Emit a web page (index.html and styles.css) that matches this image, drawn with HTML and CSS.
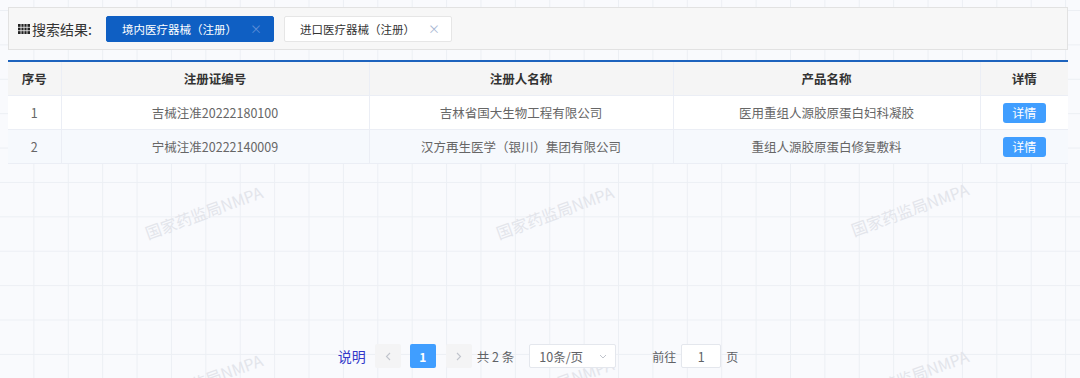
FILE: index.html
```html
<!DOCTYPE html>
<html lang="zh-CN">
<head>
<meta charset="UTF-8">
<meta name="viewport" content="width=device-width, initial-scale=1.0">
<title>搜索结果</title>
<link rel="stylesheet" href="styles.css">
</head>
<body>

<div class="page">

  <!-- 水印 -->
  <div class="watermarks">
    <span class="wm wm-1">国家药监局NMPA</span>
    <span class="wm wm-2">国家药监局NMPA</span>
    <span class="wm wm-3">国家药监局NMPA</span>
    <span class="wm wm-4">国家药监局NMPA</span>
    <span class="wm wm-5">国家药监局NMPA</span>
    <span class="wm wm-6">国家药监局NMPA</span>
  </div>

  <!-- 搜索结果标签 -->
  <div class="result-bar">
    <svg class="bar-icon" width="12" height="10" viewBox="0 0 12 10">
      <rect x="0" y="0" width="12" height="10" fill="#222"/>
      <path d="M3 0V10M6 0V10M9 0V10M0 3.3H12M0 6.7H12" stroke="#f7f7f7" stroke-width="0.8"/>
    </svg>
    <span class="bar-label">搜索结果:</span>
    <div class="tabs">
      <span class="tab active">境内医疗器械（注册）<i class="tab-close">×</i></span>
      <span class="tab">进口医疗器械（注册）<i class="tab-close">×</i></span>
    </div>
  </div>

  <!-- 结果表格 -->
  <table class="result-table">
    <colgroup>
      <col class="c-no">
      <col class="c-code">
      <col class="c-owner">
      <col class="c-product">
      <col class="c-detail">
    </colgroup>
    <thead>
      <tr>
        <th>序号</th>
        <th>注册证编号</th>
        <th>注册人名称</th>
        <th>产品名称</th>
        <th>详情</th>
      </tr>
    </thead>
    <tbody>
      <tr>
        <td>1</td>
        <td>吉械注准20222180100</td>
        <td>吉林省国大生物工程有限公司</td>
        <td>医用重组人源胶原蛋白妇科凝胶</td>
        <td><button class="btn-detail">详情</button></td>
      </tr>
      <tr class="striped">
        <td>2</td>
        <td>宁械注准20222140009</td>
        <td>汉方再生医学（银川）集团有限公司</td>
        <td>重组人源胶原蛋白修复敷料</td>
        <td><button class="btn-detail">详情</button></td>
      </tr>
    </tbody>
  </table>

  <!-- 分页 -->
  <div class="pager">
    <a class="pager-note">说明</a>
    <span class="pager-btn">
      <svg width="6" height="9" viewBox="0 0 6 9"><path d="M5 1L1.5 4.5L5 8" fill="none" stroke="#c0c4cc" stroke-width="1.1"/></svg>
    </span>
    <span class="pager-btn current">1</span>
    <span class="pager-btn">
      <svg width="6" height="9" viewBox="0 0 6 9"><path d="M1 1L4.5 4.5L1 8" fill="none" stroke="#c0c4cc" stroke-width="1.1"/></svg>
    </span>
    <span class="pager-total">共 2 条</span>
    <span class="pager-size">
      10条/页
      <svg width="8" height="5" viewBox="0 0 8 5"><path d="M1 1L4 4L7 1" fill="none" stroke="#c0c4cc" stroke-width="1"/></svg>
    </span>
    <span class="pager-jump">前往<span class="jump-input">1</span>页</span>
  </div>

</div>

</body>
</html>
```

FILE: styles.css
```css
body {
  margin: 0;
  font-family: "Noto Sans CJK SC", "Noto Sans", sans-serif;
  background: #fafbfd;
}
.page {
  position: relative;
  height: 378px;
  box-sizing: border-box;
  padding: 7px 12px 0 8px;
  overflow: hidden;
  background-color: #f9fafd;
  background-image:
    linear-gradient(to right, #eceff4 1px, transparent 1px),
    linear-gradient(to bottom, #eceff4 1px, transparent 1px);
  background-size: 34.4px 34.4px;
  background-position: -1px 10px;
}

/* 水印 */
.watermarks {
  position: absolute;
  inset: 0;
  z-index: 0;
}
.wm {
  position: absolute;
  font-size: 16px;
  color: #e3e5eb;
  white-space: nowrap;
  transform: rotate(-20deg);
  transform-origin: center;
}
.wm-1 { left: 142px; top: 200px; }
.wm-2 { left: 493px; top: 200px; }
.wm-3 { left: 848px; top: 197px; }
.wm-4 { left: 142px; top: 368px; }
.wm-5 { left: 493px; top: 372px; }
.wm-6 { left: 848px; top: 364px; }

/* 搜索结果标签 */
.result-bar {
  position: relative;
  z-index: 1;
  height: 43px;
  box-sizing: border-box;
  display: flex;
  align-items: center;
  padding-left: 9px;
  background: #f7f7f7;
  border: 1px solid #e2e2e2;
}
.bar-icon {
  margin-right: 2px;
}
.bar-label {
  font-size: 14px;
  color: #333;
  margin-right: 14px;
}
.tabs {
  display: flex;
  gap: 10px;
}
.tab {
  display: flex;
  align-items: center;
  justify-content: space-between;
  width: 168px;
  height: 26px;
  box-sizing: border-box;
  padding: 0 11px 0 15px;
  font-size: 11.5px;
  color: #333;
  background: #fff;
  border: 1px solid #e6e6e6;
  border-radius: 2px;
}
.tab.active {
  color: #fff;
  background: #0f5fc3;
  border-color: #0f5fc3;
}
.tab-close {
  font-style: normal;
  font-size: 12px;
  color: #a7b6d3;
}
.tab.active .tab-close {
  color: #5e8fd8;
}

/* 结果表格 */
.result-table {
  position: relative;
  z-index: 1;
  width: 100%;
  margin-top: 10px;
  border-collapse: collapse;
  table-layout: fixed;
  border-top: 2px solid #1d63bd;
  font-size: 12.5px;
}
.c-no { width: 53px; }
.c-code { width: 308px; }
.c-owner { width: 304px; }
.c-product { width: 307px; }
.c-detail { width: 88px; }
.result-table th,
.result-table td {
  height: 33px;
  padding: 0;
  text-align: center;
  border-bottom: 1px solid #ebeef5;
  border-left: 1px solid #ebeef5;
}
.result-table th:first-child,
.result-table td:first-child {
  border-left: none;
}
.result-table th {
  background: #f5f5f5;
  color: #333;
  font-weight: bold;
}
.result-table td {
  background: #fff;
  color: #666;
}
.result-table .striped td {
  background: #f6f9fd;
}
.btn-detail {
  width: 43px;
  height: 20px;
  padding: 0;
  border: none;
  border-radius: 3px;
  background: #409eff;
  color: #fff;
  font-family: inherit;
  font-size: 12px;
  line-height: 20px;
}

/* 分页 */
.pager {
  position: relative;
  z-index: 1;
  display: flex;
  align-items: center;
  justify-content: center;
  margin-top: 180px;
  font-size: 12.5px;
  color: #606266;
}
.pager-note {
  font-size: 14px;
  color: #3338c9;
  margin-right: 9px;
}
.pager-btn {
  display: flex;
  align-items: center;
  justify-content: center;
  width: 26px;
  height: 24px;
  margin-right: 9px;
  background: #f4f4f5;
  border-radius: 2px;
  font-weight: bold;
  font-size: 12px;
}
.pager-btn.current {
  background: #409eff;
  color: #fff;
  margin-right: 10px;
}
.pager-btn:nth-of-type(3) {
  margin-right: 5px;
}
.pager-total {
  margin-right: 15px;
}
.pager-size {
  display: flex;
  align-items: center;
  justify-content: space-between;
  width: 87px;
  height: 24px;
  box-sizing: border-box;
  padding: 0 8px 0 9px;
  background: #fff;
  border: 1px solid #e4e7ed;
  border-radius: 2px;
  font-size: 12.5px;
  color: #606266;
  margin-right: 36px;
}
.pager-jump {
  display: flex;
  align-items: center;
  gap: 5px;
  font-size: 12px;
}
.jump-input {
  display: flex;
  align-items: center;
  justify-content: center;
  width: 40px;
  height: 24px;
  box-sizing: border-box;
  background: #fff;
  border: 1px solid #e4e7ed;
  border-radius: 2px;
  font-size: 12.5px;
}
```
